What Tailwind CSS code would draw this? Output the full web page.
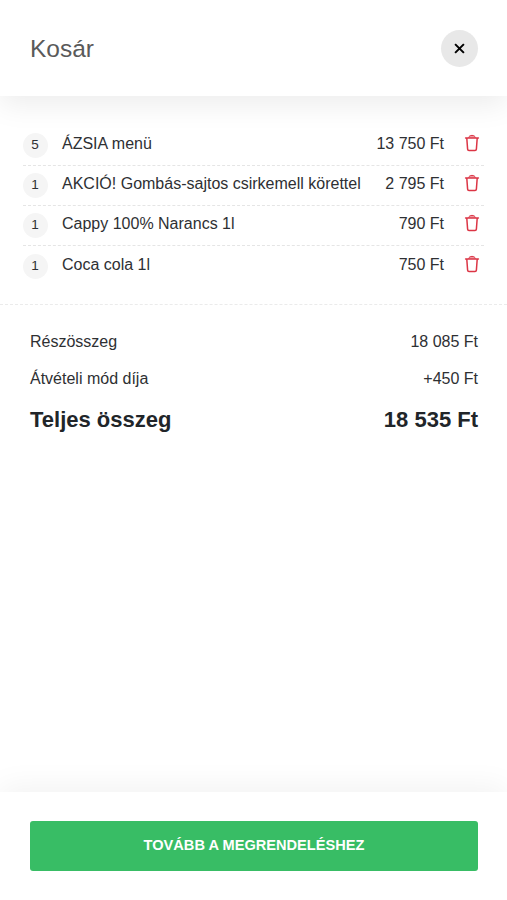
<!DOCTYPE html>
<html lang="hu">
<head>
<meta charset="utf-8">
<meta name="viewport" content="width=device-width, initial-scale=1">
<title>Kosár</title>
<script src="https://cdn.jsdelivr.net/npm/@tailwindcss/browser@4"></script>
</head>
<body class="flex h-[900px] flex-col overflow-hidden bg-white font-['Liberation_Sans',Arial,sans-serif] text-base leading-5 text-[#2e3033]">
<svg class="hidden">
  <symbol id="trash" viewBox="0 0 16 18">
    <path d="M1.600 4h12.800M2.800 4.200l.8 10.900q.1 1.300 1.400 1.300h6q1.300 0 1.400-1.300l.8-10.900" fill="none" stroke="currentColor" stroke-width="1.500" stroke-linecap="round" stroke-linejoin="round"/>
    <path d="M4.600 3.700C5 2 6.200 1.400 8 1.400s3 .6 3.400 2.300" fill="currentColor" fill-opacity=".5" stroke="currentColor" stroke-width="1"/>
  </symbol>
</svg>
<header class="relative flex h-24 shrink-0 items-center justify-between bg-white pr-[29px] pl-[30px] shadow-[0_8px_28px_rgba(0,0,0,0.08)]">
  <h1 class="pt-0.5 text-[24.500px] leading-8 text-[#5a5a5a]">Kosár</h1>
  <button class="flex size-[37px] items-center justify-center rounded-full bg-[#e8e8e8]" aria-label="Bezárás">
    <svg class="size-[11px]" viewBox="0 0 11 11"><path d="M1.100 1.100l8.800 8.800M9.900 1.100l-8.800 8.800" stroke="#000" stroke-width="2"/></svg>
  </button>
</header>
<main class="flex-1">
  <ul class="h-[209px] border-b border-dashed border-[#ebebeb] pt-[29.500px] pr-[23px] pl-[23px]">
    <li class="flex h-[40.300px] items-center border-b border-dashed border-[#e5e5e5]">
      <span class="flex size-[25px] items-center justify-center rounded-full bg-[#f5f5f5] pr-px pb-px text-[13.500px]">5</span>
      <span class="ml-[14px] flex-1 pb-[3px]">ÁZSIA menü</span><span class="pb-[3px]">13 750 Ft</span>
      <svg class="mr-1 mb-1 ml-5 h-[18px] w-4 text-[#dc3545]"><use href="#trash"/></svg>
    </li>
    <li class="flex h-[40.300px] items-center border-b border-dashed border-[#e5e5e5]">
      <span class="flex size-[25px] items-center justify-center rounded-full bg-[#f5f5f5] pr-px pb-px text-[13.500px]">1</span>
      <span class="ml-[14px] flex-1 pb-[3px]">AKCIÓ! Gombás-sajtos csirkemell körettel</span><span class="pb-[3px]">2 795 Ft</span>
      <svg class="mr-1 mb-1 ml-5 h-[18px] w-4 text-[#dc3545]"><use href="#trash"/></svg>
    </li>
    <li class="flex h-[40.300px] items-center border-b border-dashed border-[#e5e5e5]">
      <span class="flex size-[25px] items-center justify-center rounded-full bg-[#f5f5f5] pr-px pb-px text-[13.500px]">1</span>
      <span class="ml-[14px] flex-1 pb-[3px]">Cappy 100% Narancs 1l</span><span class="pb-[3px]">790 Ft</span>
      <svg class="mr-1 mb-[5px] ml-5 h-[18px] w-4 text-[#dc3545]"><use href="#trash"/></svg>
    </li>
    <li class="flex h-[40.300px] items-center">
      <span class="flex size-[25px] items-center justify-center rounded-full bg-[#f5f5f5] pr-px pb-px text-[13.500px]">1</span>
      <span class="ml-[14px] flex-1 pb-[3px]">Coca cola 1l</span><span class="pb-[3px]">750 Ft</span>
      <svg class="mr-1 mb-[5px] ml-5 h-[18px] w-4 text-[#dc3545]"><use href="#trash"/></svg>
    </li>
  </ul>
  <section class="pr-[29px] pl-[30px] pt-[27px]">
    <div class="flex justify-between"><span>Részösszeg</span><span>18 085 Ft</span></div>
    <div class="mt-[17px] flex justify-between"><span>Átvételi mód díja</span><span>+450 Ft</span></div>
    <div class="mt-[17px] flex justify-between text-[22px] leading-7 font-bold text-[#212529]"><span>Teljes összeg</span><span>18 535 Ft</span></div>
  </section>
</main>
<footer class="relative h-[108px] shrink-0 bg-white pr-[29px] pl-[30px] pt-[29px] shadow-[0_-6px_28px_rgba(0,0,0,0.05)]">
  <button class="flex h-[50px] w-full items-center justify-center rounded-[3px] bg-[#38bd65] pb-0.5 text-[14.600px] font-bold text-white">TOVÁBB A MEGRENDELÉSHEZ</button>
</footer>
</body>
</html>
